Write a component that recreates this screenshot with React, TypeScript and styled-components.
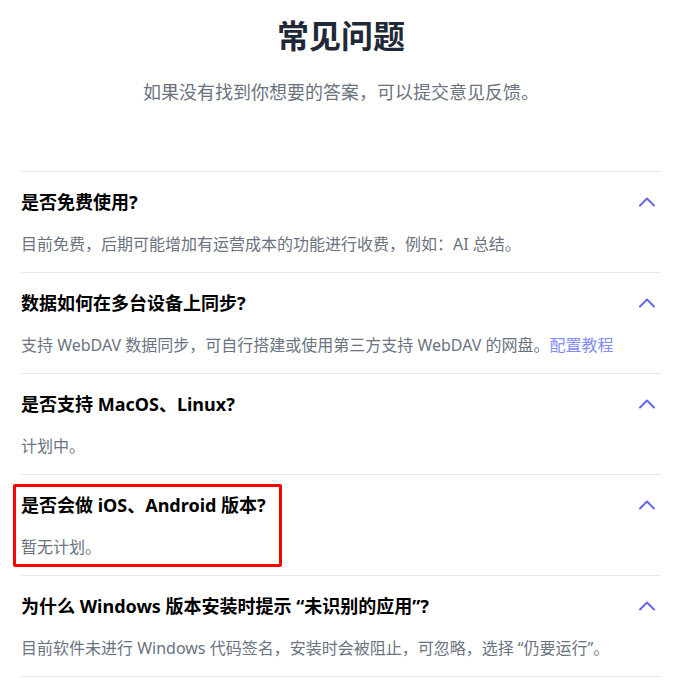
import styled, { createGlobalStyle } from 'styled-components';
import { ChevronUp } from 'lucide-react';

const GlobalStyle = createGlobalStyle`
  body {
    margin: 0;
    background: #ffffff;
    font-family: 'Noto Sans', 'Noto Sans CJK SC', sans-serif;
  }
`;

const Page = styled.div`
  width: 640px;
  margin-left: 21px;
  padding-top: 16px;
`;

const Title = styled.h2`
  margin: 0;
  text-align: center;
  font-size: 32px;
  line-height: 40px;
  font-weight: 700;
  color: #1f2937;
`;

const Subtitle = styled.p`
  margin: 22px 0 0;
  text-align: center;
  font-size: 18px;
  line-height: 28px;
  color: #6b7280;
`;

const List = styled.div`
  margin-top: 65px;
  border-top: 1px solid #e5e7eb;
`;

const Item = styled.div`
  position: relative;
  padding: 16px 0;
  border-bottom: 1px solid #e5e7eb;
  display: flex;
  flex-direction: column;
  gap: 16px;
`;

const Question = styled.div`
  display: flex;
  align-items: center;
  justify-content: space-between;
  font-size: 18px;
  line-height: 28px;
  font-weight: 700;
  color: #000000;
`;

const Answer = styled.div`
  font-size: 16px;
  line-height: 24px;
  color: #6b7280;
`;

const Link = styled.a`
  color: #818cf8;
  text-decoration: none;
`;

const Highlight = styled.div`
  position: absolute;
  left: -8px;
  top: 9px;
  width: 269px;
  height: 83px;
  box-sizing: border-box;
  border: 3px solid #ff0000;
  border-radius: 2px;
  pointer-events: none;
`;

type Faq = {
  q: string;
  a: React.ReactNode;
  marked?: boolean;
};

const faqs: Faq[] = [
  { q: '是否免费使用?', a: '目前免费，后期可能增加有运营成本的功能进行收费，例如：AI 总结。' },
  {
    q: '数据如何在多台设备上同步?',
    a: (
      <>
        支持 WebDAV 数据同步，可自行搭建或使用第三方支持 WebDAV 的网盘。<Link href="#">配置教程</Link>
      </>
    ),
  },
  { q: '是否支持 MacOS、Linux?', a: '计划中。' },
  { q: '是否会做 iOS、Android 版本?', a: '暂无计划。', marked: true },
  {
    q: '为什么 Windows 版本安装时提示 “未识别的应用”?',
    a: '目前软件未进行 Windows 代码签名，安装时会被阻止，可忽略，选择 “仍要运行”。',
  },
];

export default function App() {
  return (
    <>
      <GlobalStyle />
      <Page>
        <Title>常见问题</Title>
        <Subtitle>如果没有找到你想要的答案，可以提交意见反馈。</Subtitle>
        <List>
          {faqs.map((f) => (
            <Item key={f.q}>
              <Question>
                <span>{f.q}</span>
                <ChevronUp size={28} strokeWidth={2} absoluteStrokeWidth color="#6366f1" />
              </Question>
              <Answer>{f.a}</Answer>
              {f.marked && <Highlight />}
            </Item>
          ))}
        </List>
      </Page>
    </>
  );
}
